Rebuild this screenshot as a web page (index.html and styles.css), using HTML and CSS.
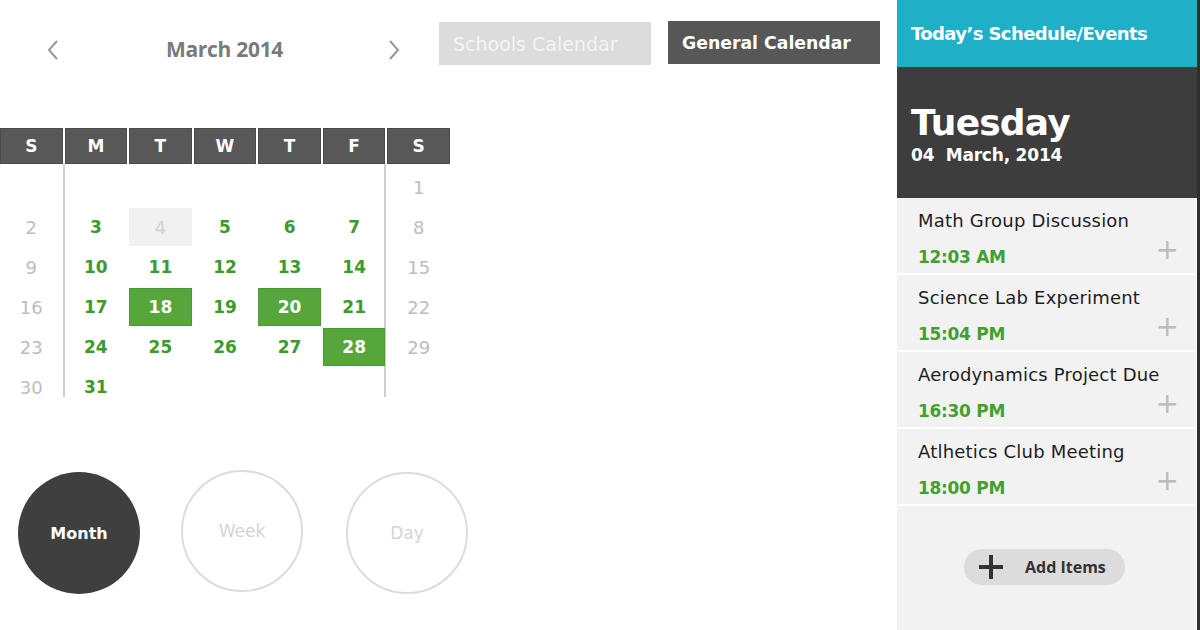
FILE: index.html
```html
<!DOCTYPE html>
<html>
<head>
<meta charset="utf-8">
<link rel="stylesheet" href="styles.css">
</head>
<body>
<div class="app">
  <main class="main">
    <div class="topbar">
      <div class="monthnav">
        <svg class="arrow" width="14" height="22" viewBox="0 0 14 22"><path d="M11 2 L3 11 L11 20" fill="none" stroke="#999" stroke-width="2"/></svg>
        <span class="month-title">March 2014</span>
        <svg class="arrow" width="14" height="22" viewBox="0 0 14 22"><path d="M3 2 L11 11 L3 20" fill="none" stroke="#999" stroke-width="2"/></svg>
      </div>
      <button class="tab tab-off">Schools Calendar</button>
      <button class="tab tab-on">General Calendar</button>
    </div>

    <div class="calendar">
      <div class="head">
        <div class="hcell">S</div><div class="hcell">M</div><div class="hcell">T</div><div class="hcell">W</div><div class="hcell">T</div><div class="hcell">F</div><div class="hcell">S</div>
      </div>
      <div class="body">
        <div class="d"></div><div class="d"></div><div class="d"></div><div class="d"></div><div class="d"></div><div class="d"></div><div class="d we">1</div>
        <div class="d we">2</div><div class="d">3</div><div class="d today">4</div><div class="d">5</div><div class="d">6</div><div class="d">7</div><div class="d we">8</div>
        <div class="d we">9</div><div class="d">10</div><div class="d">11</div><div class="d">12</div><div class="d">13</div><div class="d">14</div><div class="d we">15</div>
        <div class="d we">16</div><div class="d">17</div><div class="d ev">18</div><div class="d">19</div><div class="d ev">20</div><div class="d">21</div><div class="d we">22</div>
        <div class="d we">23</div><div class="d">24</div><div class="d">25</div><div class="d">26</div><div class="d">27</div><div class="d ev">28</div><div class="d we">29</div>
        <div class="d we">30</div><div class="d">31</div><div class="d"></div><div class="d"></div><div class="d"></div><div class="d"></div><div class="d"></div>
      </div>
    </div>

    <div class="views">
      <div class="circle c-on c-month">Month</div>
      <div class="circle c-off c-week">Week</div>
      <div class="circle c-off c-day">Day</div>
    </div>
  </main>

  <aside class="panel">
    <div class="panel-head">Today’s Schedule/Events</div>
    <div class="panel-date">
      <div class="dayname">Tuesday</div>
      <div class="fulldate">04&nbsp; March, 2014</div>
    </div>
    <div class="item">
      <div class="item-title">Math Group Discussion</div>
      <div class="item-row"><span class="item-time">12:03 AM</span><span class="plus">+</span></div>
    </div>
    <div class="item">
      <div class="item-title">Science Lab Experiment</div>
      <div class="item-row"><span class="item-time">15:04 PM</span><span class="plus">+</span></div>
    </div>
    <div class="item">
      <div class="item-title">Aerodynamics Project Due</div>
      <div class="item-row"><span class="item-time">16:30 PM</span><span class="plus">+</span></div>
    </div>
    <div class="item item-last">
      <div class="item-title">Atlhetics Club Meeting</div>
      <div class="item-row"><span class="item-time">18:00 PM</span><span class="plus">+</span></div>
    </div>
    <div class="add-wrap">
      <button class="add-btn">
        <svg width="26" height="26" viewBox="0 0 26 26"><path d="M13 1 V25 M1 13 H25" stroke="#333" stroke-width="4"/></svg>
        <span>Add Items</span>
      </button>
    </div>
  </aside>
</div>
</body>
</html>
```

FILE: styles.css
```css
* { box-sizing: border-box; }
html, body { margin: 0; padding: 0; background: #fff; }
body {
  width: 1200px;
  height: 630px;
  overflow: hidden;
  font-family: "DejaVu Sans", sans-serif;
}
.app { display: flex; height: 630px; }
.main { width: 897px; flex: none; }

.topbar {
  display: flex;
  align-items: flex-start;
  height: 128px;
}
.monthnav {
  display: flex;
  align-items: center;
  justify-content: space-between;
  width: 401px;
  padding: 39px 0 0 46px;
}
.arrow { display: block; }
.month-title {
  font-family: "Open Sans", sans-serif;
  font-weight: 700;
  font-size: 21px;
  line-height: 24px;
  color: #7a7a7a;
  letter-spacing: -0.3px;
  margin-left: 2px;
  margin-top: -2px;
}
.tab {
  border: 0;
  height: 43px;
  width: 212px;
  font-size: 18px;
  text-align: left;
  padding: 0 0 0 14px;
  font-family: "DejaVu Sans", sans-serif;
}
.tab-off {
  margin: 22px 0 0 38px;
  background: #dcdcdc;
  color: #f4f4f4;
  font-size: 19px;
}
.tab-on {
  margin: 21px 0 0 17px;
  background: #575757;
  color: #fff;
  font-weight: 700;
  font-size: 17.3px;
}

.calendar { width: 450px; }
.head {
  display: grid;
  grid-template-columns: repeat(7, 1fr);
  column-gap: 2px;
}
.hcell {
  height: 36px;
  background: #585858;
  border: 1px solid #4a4a4a;
  color: #fff;
  font-weight: 700;
  font-size: 17px;
  display: flex;
  align-items: center;
  justify-content: center;
}
.body {
  display: grid;
  grid-template-columns: repeat(7, 1fr);
  grid-auto-rows: 38px;
  column-gap: 2px;
  row-gap: 2px;
  padding-top: 4px;
  background:
    linear-gradient(#cfcfcf, #cfcfcf) 63px 0 / 2px 233px no-repeat,
    linear-gradient(#cfcfcf, #cfcfcf) 384px 0 / 2px 233px no-repeat;
}
.d {
  display: flex;
  align-items: center;
  justify-content: center;
  font-weight: 700;
  font-size: 17px;
  color: #3d9a2c;
}
.d.we { color: #bdbdbd; font-weight: 400; font-size: 18px; }
.d.today { background: #f1f1f1; color: #d0d0d0; font-weight: 400; font-size: 18px; }
.d.ev { background: #56a63c; color: #fff; border: 1px solid #4c9a34; }

.views {
  display: flex;
  align-items: flex-start;
  padding: 64px 0 0 18px;
}
.circle {
  width: 122px;
  height: 122px;
  border-radius: 50%;
  display: flex;
  align-items: center;
  justify-content: center;
  font-size: 16px;
}
.c-on { background: #3f3f3f; color: #fff; font-weight: 700; margin-top: 2px; }
.c-off { border: 2px solid #dcdcdc; color: #d4d4d4; font-size: 17px; }
.c-week { margin-left: 41px; }
.c-day { margin-left: 43px; margin-top: 2px; }

.panel {
  width: 303px;
  flex: none;
  background: #f2f2f2;
  border-right: 3px solid #2e2e2e;
  display: flex;
  flex-direction: column;
}
.panel-head {
  height: 67px;
  background: #1fb0c8;
  color: #fff;
  font-weight: 700;
  font-size: 18px;
  padding: 23px 0 0 14px;
  letter-spacing: -0.6px;
}
.panel-date {
  height: 131px;
  background: #3d3d3d;
  color: #fff;
  padding: 35px 0 0 14px;
}
.dayname {
  font-weight: 700;
  font-size: 36px;
  line-height: 42px;
  letter-spacing: -0.8px;
}
.fulldate {
  font-weight: 700;
  font-size: 17px;
  line-height: 22px;
  margin-top: 0px;
  letter-spacing: -0.2px;
}
.item {
  height: 77px;
  border-bottom: 2px solid #fff;
  border-right: 1px solid #fff;
  padding: 12px 0 0 21px;
}
.item-title {
  font-size: 18px;
  color: #1e1e1e;
  line-height: 22px;
  letter-spacing: 0.2px;
}
.item-row {
  display: flex;
  justify-content: space-between;
  align-items: flex-start;
  padding-right: 17px;
  margin-top: 9px;
}
.item-time {
  font-weight: 700;
  font-size: 17px;
  color: #42a02f;
  line-height: 26px;
  margin-top: 3px;
  letter-spacing: -0.3px;
}
.plus {
  font-size: 28px;
  line-height: 22px;
  color: #bcbcbc;
  font-weight: 400;
  margin-top: -2px;
}
.add-wrap {
  flex: 1;
  border-right: 1px solid #fff;
  display: flex;
  justify-content: center;
  align-items: flex-start;
  padding: 43px 4px 0 0;
}
.add-btn {
  width: 161px;
  height: 36px;
  border: 0;
  border-radius: 18px;
  background: #dcdcdc;
  display: flex;
  align-items: center;
  padding: 0 0 0 14px;
  gap: 21px;
  font-family: "Open Sans", sans-serif;
  font-weight: 700;
  font-size: 16px;
  color: #333;
}
.add-btn svg { display: block; }
```
